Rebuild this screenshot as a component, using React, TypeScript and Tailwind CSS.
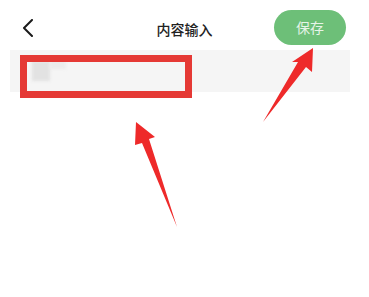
// Editor header with an input row; red box and arrows are annotation overlays.
export default function App() {
  return (
    <div
      className="relative h-[297px] w-[369px] overflow-hidden bg-white"
      style={{ fontFamily: '"Noto Sans CJK SC", "Noto Sans", sans-serif' }}
    >
      <header className="relative flex h-[50px] items-center justify-between pl-[22px] pr-[23px] pt-[5px]">
        <svg width="12" height="18" viewBox="0 0 12 18" className="text-[#1a1a1a]">
          <polyline
            points="10,1 2,9 10,17"
            fill="none"
            stroke="currentColor"
            strokeWidth="2"
            strokeLinecap="round"
            strokeLinejoin="round"
          />
        </svg>
        <h1 className="absolute left-1/2 top-[20px] -translate-x-1/2 text-[14px] font-medium leading-[18px] text-[#222]">
          内容输入
        </h1>
        <button className="flex h-[35px] w-[72px] items-center justify-center rounded-full bg-[#6dbf78] text-[14px] text-[#e6f4e8]">
          保存
        </button>
      </header>

      <div className="ml-[10px] mr-[19px] flex h-[42px] items-center bg-[#f5f5f5] pl-[22px]">
        <span className="h-[20px] w-[18px] bg-[#e2e2e2] blur-[1.5px]" />
        <span className="mt-[9px] h-[10px] w-[16px] self-start bg-[#ececec] blur-[1.5px]" />
      </div>

      {/* annotation box */}
      <div className="absolute left-[20px] top-[55px] h-[43px] w-[172px] border-[7px] border-[#e53935]" />

      {/* annotation arrows */}
      <svg className="absolute inset-0" width="369" height="297" viewBox="0 0 369 297">
        <polygon
          points="136,122 155,137 149,139 177,227 142,143 135,145"
          fill="#ee2a2a"
        />
        <polygon
          points="313,48 312,72 306,67 263,122 298,62 292,62"
          fill="#ee2a2a"
        />
      </svg>
    </div>
  );
}
